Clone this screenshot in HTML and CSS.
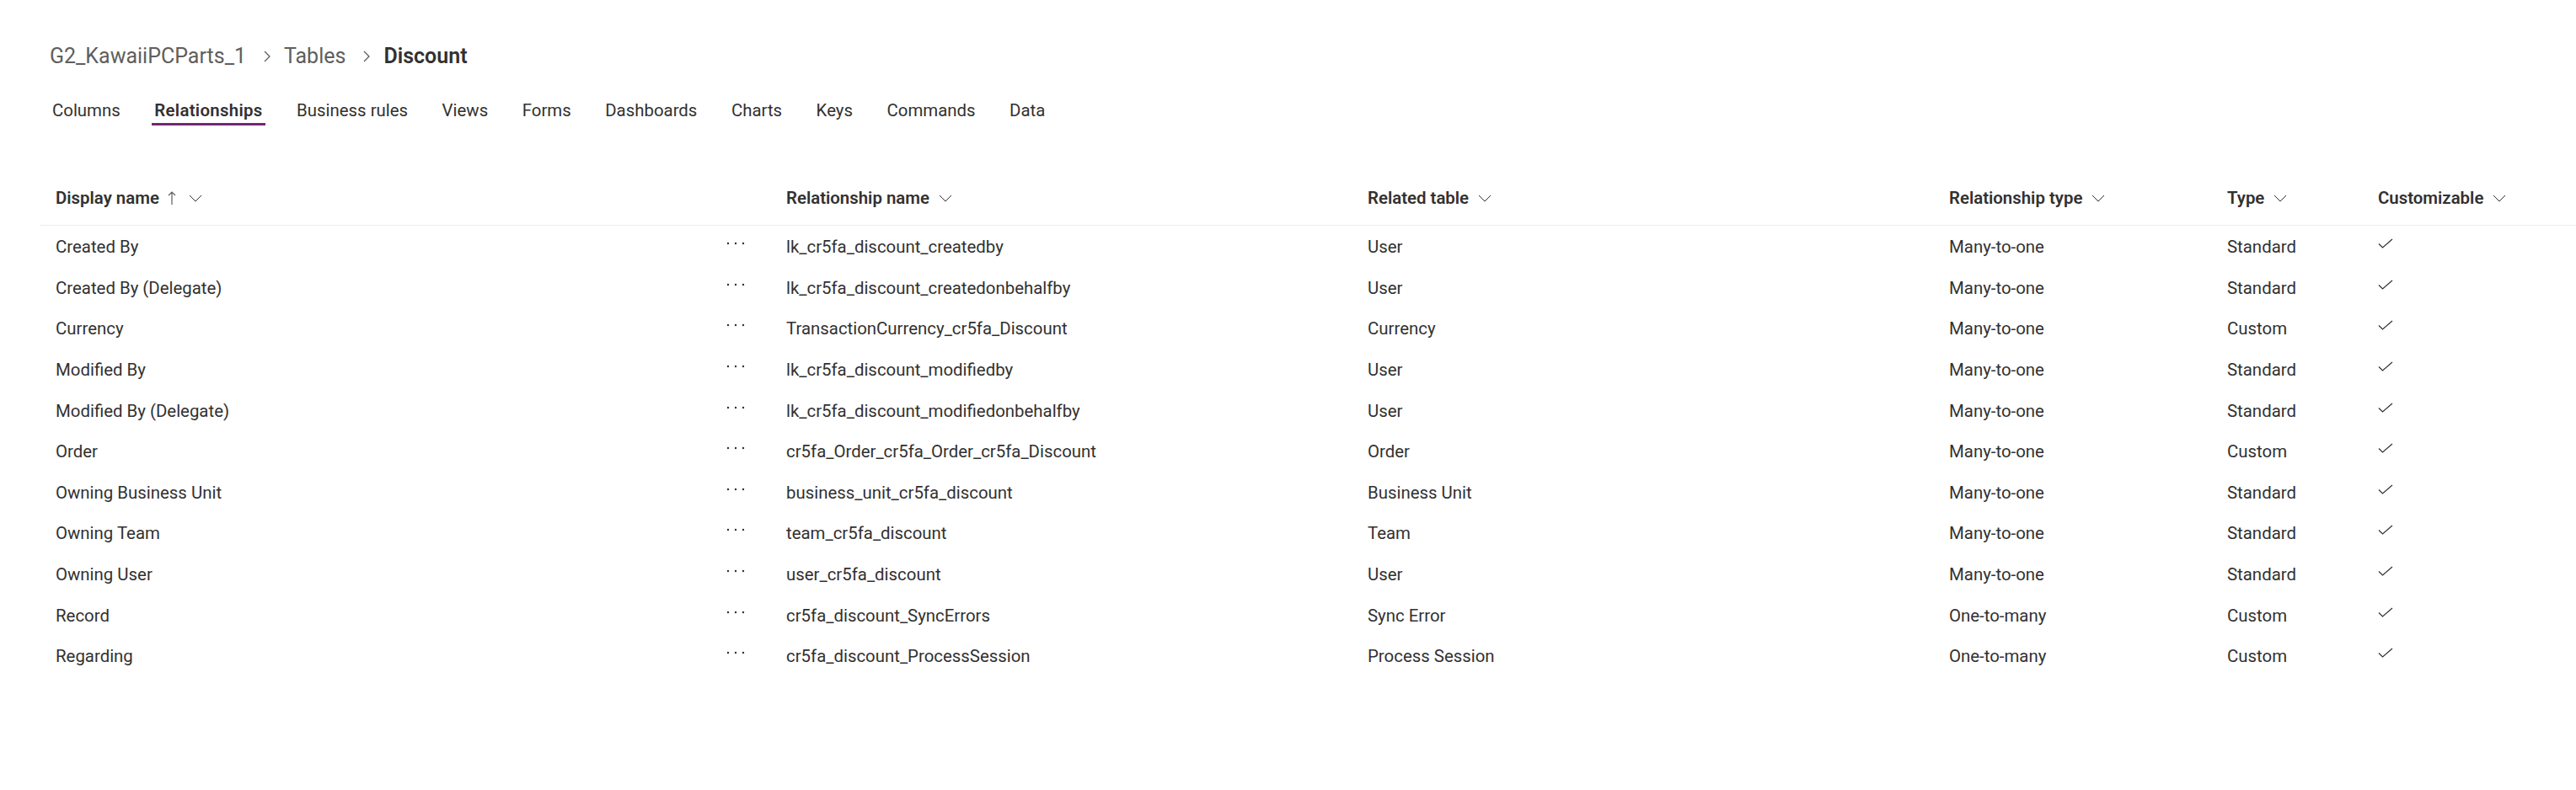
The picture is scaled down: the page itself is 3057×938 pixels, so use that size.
FILE: index.html
```html
<!DOCTYPE html>
<html lang="en">
<head>
<meta charset="utf-8">
<title>Discount - Relationships</title>
<link rel="stylesheet" href="styles.css">
</head>
<body>
<div class="page">
  <nav class="breadcrumb">
    <span class="crumb">G2_KawaiiPCParts_1</span>
    <svg class="crumb-sep" width="10" height="14" viewBox="0 0 10 14"><path d="M2 1 L8 7 L2 13" /></svg>
    <span class="crumb">Tables</span>
    <svg class="crumb-sep" width="10" height="14" viewBox="0 0 10 14"><path d="M2 1 L8 7 L2 13" /></svg>
    <span class="crumb current">Discount</span>
  </nav>

  <div class="tabs">
    <span class="tab">Columns</span>
    <span class="tab active">Relationships</span>
    <span class="tab">Business rules</span>
    <span class="tab">Views</span>
    <span class="tab">Forms</span>
    <span class="tab">Dashboards</span>
    <span class="tab">Charts</span>
    <span class="tab">Keys</span>
    <span class="tab">Commands</span>
    <span class="tab">Data</span>
  </div>

  <div class="grid">
    <div class="row head">
      <div class="cell"><span>Display name</span>
        <svg class="sort" width="10" height="17" viewBox="0 0 10 17"><path d="M5 1 V16 M1 5 L5 1 L9 5" /></svg>
        <svg class="chev" width="16" height="9" viewBox="0 0 16 9"><path d="M1 1 L8 8 L15 1" /></svg></div>
      <div class="cell"><span>Relationship name</span><svg class="chev" width="16" height="9" viewBox="0 0 16 9"><path d="M1 1 L8 8 L15 1" /></svg></div>
      <div class="cell"><span>Related table</span><svg class="chev" width="16" height="9" viewBox="0 0 16 9"><path d="M1 1 L8 8 L15 1" /></svg></div>
      <div class="cell"><span>Relationship type</span><svg class="chev" width="16" height="9" viewBox="0 0 16 9"><path d="M1 1 L8 8 L15 1" /></svg></div>
      <div class="cell"><span>Type</span><svg class="chev" width="16" height="9" viewBox="0 0 16 9"><path d="M1 1 L8 8 L15 1" /></svg></div>
      <div class="cell"><span>Customizable</span><svg class="chev" width="16" height="9" viewBox="0 0 16 9"><path d="M1 1 L8 8 L15 1" /></svg></div>
    </div>

    <div class="body">
      <div class="row"><div class="cell first"><span>Created By</span><svg class="more" width="22" height="4" viewBox="0 0 22 4"><circle cx="2" cy="2" r="1.2"/><circle cx="11" cy="2" r="1.2"/><circle cx="20" cy="2" r="1.2"/></svg></div><div class="cell">lk_cr5fa_discount_createdby</div><div class="cell">User</div><div class="cell">Many-to-one</div><div class="cell">Standard</div><div class="cell"><svg class="check" width="18" height="12" viewBox="0 0 18 12"><path d="M1 6.5 L5.5 11 L17 1" /></svg></div></div>
      <div class="row"><div class="cell first"><span>Created By (Delegate)</span><svg class="more" width="22" height="4" viewBox="0 0 22 4"><circle cx="2" cy="2" r="1.2"/><circle cx="11" cy="2" r="1.2"/><circle cx="20" cy="2" r="1.2"/></svg></div><div class="cell">lk_cr5fa_discount_createdonbehalfby</div><div class="cell">User</div><div class="cell">Many-to-one</div><div class="cell">Standard</div><div class="cell"><svg class="check" width="18" height="12" viewBox="0 0 18 12"><path d="M1 6.5 L5.5 11 L17 1" /></svg></div></div>
      <div class="row"><div class="cell first"><span>Currency</span><svg class="more" width="22" height="4" viewBox="0 0 22 4"><circle cx="2" cy="2" r="1.2"/><circle cx="11" cy="2" r="1.2"/><circle cx="20" cy="2" r="1.2"/></svg></div><div class="cell">TransactionCurrency_cr5fa_Discount</div><div class="cell">Currency</div><div class="cell">Many-to-one</div><div class="cell">Custom</div><div class="cell"><svg class="check" width="18" height="12" viewBox="0 0 18 12"><path d="M1 6.5 L5.5 11 L17 1" /></svg></div></div>
      <div class="row"><div class="cell first"><span>Modified By</span><svg class="more" width="22" height="4" viewBox="0 0 22 4"><circle cx="2" cy="2" r="1.2"/><circle cx="11" cy="2" r="1.2"/><circle cx="20" cy="2" r="1.2"/></svg></div><div class="cell">lk_cr5fa_discount_modifiedby</div><div class="cell">User</div><div class="cell">Many-to-one</div><div class="cell">Standard</div><div class="cell"><svg class="check" width="18" height="12" viewBox="0 0 18 12"><path d="M1 6.5 L5.5 11 L17 1" /></svg></div></div>
      <div class="row"><div class="cell first"><span>Modified By (Delegate)</span><svg class="more" width="22" height="4" viewBox="0 0 22 4"><circle cx="2" cy="2" r="1.2"/><circle cx="11" cy="2" r="1.2"/><circle cx="20" cy="2" r="1.2"/></svg></div><div class="cell">lk_cr5fa_discount_modifiedonbehalfby</div><div class="cell">User</div><div class="cell">Many-to-one</div><div class="cell">Standard</div><div class="cell"><svg class="check" width="18" height="12" viewBox="0 0 18 12"><path d="M1 6.5 L5.5 11 L17 1" /></svg></div></div>
      <div class="row"><div class="cell first"><span>Order</span><svg class="more" width="22" height="4" viewBox="0 0 22 4"><circle cx="2" cy="2" r="1.2"/><circle cx="11" cy="2" r="1.2"/><circle cx="20" cy="2" r="1.2"/></svg></div><div class="cell">cr5fa_Order_cr5fa_Order_cr5fa_Discount</div><div class="cell">Order</div><div class="cell">Many-to-one</div><div class="cell">Custom</div><div class="cell"><svg class="check" width="18" height="12" viewBox="0 0 18 12"><path d="M1 6.5 L5.5 11 L17 1" /></svg></div></div>
      <div class="row"><div class="cell first"><span>Owning Business Unit</span><svg class="more" width="22" height="4" viewBox="0 0 22 4"><circle cx="2" cy="2" r="1.2"/><circle cx="11" cy="2" r="1.2"/><circle cx="20" cy="2" r="1.2"/></svg></div><div class="cell">business_unit_cr5fa_discount</div><div class="cell">Business Unit</div><div class="cell">Many-to-one</div><div class="cell">Standard</div><div class="cell"><svg class="check" width="18" height="12" viewBox="0 0 18 12"><path d="M1 6.5 L5.5 11 L17 1" /></svg></div></div>
      <div class="row"><div class="cell first"><span>Owning Team</span><svg class="more" width="22" height="4" viewBox="0 0 22 4"><circle cx="2" cy="2" r="1.2"/><circle cx="11" cy="2" r="1.2"/><circle cx="20" cy="2" r="1.2"/></svg></div><div class="cell">team_cr5fa_discount</div><div class="cell">Team</div><div class="cell">Many-to-one</div><div class="cell">Standard</div><div class="cell"><svg class="check" width="18" height="12" viewBox="0 0 18 12"><path d="M1 6.5 L5.5 11 L17 1" /></svg></div></div>
      <div class="row"><div class="cell first"><span>Owning User</span><svg class="more" width="22" height="4" viewBox="0 0 22 4"><circle cx="2" cy="2" r="1.2"/><circle cx="11" cy="2" r="1.2"/><circle cx="20" cy="2" r="1.2"/></svg></div><div class="cell">user_cr5fa_discount</div><div class="cell">User</div><div class="cell">Many-to-one</div><div class="cell">Standard</div><div class="cell"><svg class="check" width="18" height="12" viewBox="0 0 18 12"><path d="M1 6.5 L5.5 11 L17 1" /></svg></div></div>
      <div class="row"><div class="cell first"><span>Record</span><svg class="more" width="22" height="4" viewBox="0 0 22 4"><circle cx="2" cy="2" r="1.2"/><circle cx="11" cy="2" r="1.2"/><circle cx="20" cy="2" r="1.2"/></svg></div><div class="cell">cr5fa_discount_SyncErrors</div><div class="cell">Sync Error</div><div class="cell">One-to-many</div><div class="cell">Custom</div><div class="cell"><svg class="check" width="18" height="12" viewBox="0 0 18 12"><path d="M1 6.5 L5.5 11 L17 1" /></svg></div></div>
      <div class="row"><div class="cell first"><span>Regarding</span><svg class="more" width="22" height="4" viewBox="0 0 22 4"><circle cx="2" cy="2" r="1.2"/><circle cx="11" cy="2" r="1.2"/><circle cx="20" cy="2" r="1.2"/></svg></div><div class="cell">cr5fa_discount_ProcessSession</div><div class="cell">Process Session</div><div class="cell">One-to-many</div><div class="cell">Custom</div><div class="cell"><svg class="check" width="18" height="12" viewBox="0 0 18 12"><path d="M1 6.5 L5.5 11 L17 1" /></svg></div></div>
    </div>
  </div>
</div>
</body>
</html>
```

FILE: styles.css
```css
html, body {
  margin: 0;
  padding: 0;
  background: #ffffff;
}

body {
  font-family: Roboto, "Noto Sans", Arial, sans-serif;
  color: #323130;
  font-size: 20.4px;
}

.page {
  padding: 49px 0 0 47px;
}

.breadcrumb {
  display: flex;
  align-items: center;
  height: 36px;
  padding-left: 12px;
  font-size: 25px;
  line-height: 36px;
}

.crumb {
  color: #605e5c;
}

.crumb.current {
  color: #323130;
  font-weight: 600;
}

.crumb-sep {
  margin: 0 15px 0 20px;
  fill: none;
  stroke: #605e5c;
  stroke-width: 1.3;
}

.tabs {
  display: flex;
  gap: 34.5px;
  margin-top: 32px;
  padding-left: 12px;
}

.tab {
  line-height: 28px;
  padding: 0 3px 1px;
  border-bottom: 3px solid transparent;
  color: #323130;
}

.tab.active {
  font-weight: 600;
  letter-spacing: 0.3px;
  border-bottom-color: #742774;
}

.grid {
  margin-top: 54px;
}

.row {
  display: grid;
  grid-template-columns: 867px 690px 690px 330px 179px 1fr;
  height: 48.6px;
  align-items: center;
}

.row.head {
  height: 64px;
  border-bottom: 1px solid #edebe9;
  font-weight: 600;
}

.body {
  padding-top: 1px;
}

.cell {
  display: flex;
  align-items: center;
  padding-left: 19px;
  line-height: 28px;
  white-space: nowrap;
}

.cell.first {
  justify-content: space-between;
  padding-right: 30px;
}

.chev {
  margin-left: 11px;
  fill: none;
  stroke: #323130;
  stroke-width: 1;
}

.sort {
  margin-left: 10px;
  fill: none;
  stroke: #605e5c;
  stroke-width: 1.2;
}

.sort + .chev {
  margin-left: 15px;
}

.more {
  fill: #323130;
  margin-top: -8px;
}

.check {
  margin-top: -8px;
  fill: none;
  stroke: #323130;
  stroke-width: 1.2;
}
```
